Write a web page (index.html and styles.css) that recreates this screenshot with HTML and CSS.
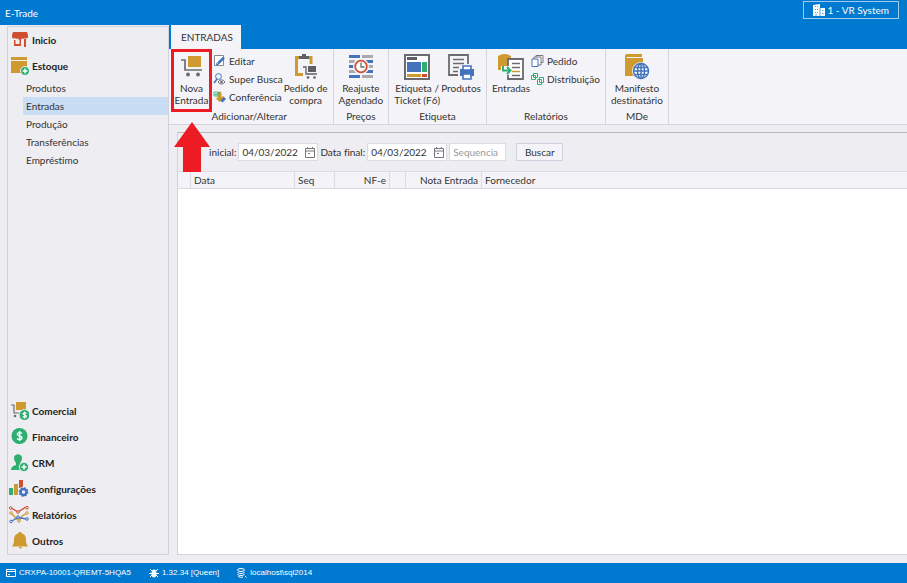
FILE: index.html
```html
<!DOCTYPE html>
<html lang="pt-BR">
<head>
<meta charset="utf-8">
<title>E-Trade</title>
<link rel="stylesheet" href="styles.css">
</head>
<body>
<header class="titlebar">
  <h1 class="app-name">E-Trade</h1>
  <button class="company" type="button">
    <svg width="12" height="12" viewBox="0 0 12 12"><path fill="#fff" d="M0 1l7-1v4h5v8H0z"/><path stroke="#0079d0" stroke-width=".7" d="M2 2.500h1M4 2.500h1M2 5.500h1M4 5.500h1M2 8.500h1M4 8.500h1M9 6.500h1.500M9 9.500h1.500M7 4v8M3 12v-2"/></svg>
    <span>1 - VR System</span>
  </button>
</header>

<div class="shell">
  <nav class="sidebar">
    <div class="menu">
      <a class="menu-item" href="#"><svg width="18" height="18" viewBox="0 0 18 18"><g fill="#d04f31"><path d="M2 1h14l1 3H1z"/><path d="M1 4h16v2a2 2 0 0 1-3 1 2 2 0 0 1-3 0 2 2 0 0 1-4 0 2 2 0 0 1-3 0 2 2 0 0 1-3-1z"/><path d="M3 9h1.500v4h4V9H10v6H3zM13 8h2v8h-2z"/></g></svg>Inicio</a>
      <a class="menu-item" href="#"><svg width="18" height="18" viewBox="0 0 18 18"><path fill="#cf9a30" d="M0 0h16v3H0zM0 4h16v12H0z"/><circle cx="14" cy="14" r="4.500" fill="#2fae71" stroke="#eeedf2"/><path stroke="#fff" stroke-width="1.500" d="M11.500 14h5M14 11.500v5"/></svg>Estoque</a>
      <div class="submenu">
        <a href="#">Produtos</a>
        <a href="#" class="selected">Entradas</a>
        <a href="#">Produção</a>
        <a href="#">Transferências</a>
        <a href="#">Empréstimo</a>
      </div>
    </div>
    <div class="menu">
      <a class="menu-item" href="#"><svg width="18" height="18" viewBox="0 0 18 18"><path fill="#cf9a30" d="M5 0h10v8H5z"/><path fill="none" stroke="#6b6b70" stroke-width="1.200" d="M0 3h3v8h7"/><circle cx="4" cy="14" r="1.300" fill="#6b6b70"/><circle cx="13.500" cy="13" r="5.500" fill="#2fae71" stroke="#eeedf2"/><path fill="none" stroke="#fff" stroke-width="1.100" d="M15.500 11.500c-1-1-3.500-1-3.500.300s3.500 1 3.500 2.400-2.500 1.300-3.700.300M13.700 9.500v7"/></svg>Comercial</a>
      <a class="menu-item" href="#"><svg width="18" height="18" viewBox="0 0 18 18"><circle cx="8.500" cy="8" r="8" fill="#2fae71"/><path fill="none" stroke="#fff" stroke-width="1.400" d="M11 5.500C9.500 4.200 6.300 4.200 6.300 6.200S11 7.800 11 9.800s-3.300 2.200-5 .600M8.600 3v10"/></svg>Financeiro</a>
      <a class="menu-item" href="#"><svg width="18" height="18" viewBox="0 0 18 18"><g fill="#2fae71"><path d="M3 4c0-5 8-5 8 0 0 2-1 4-2 5v2l2 1v4H0c0-3 2-4 5-5V9C4 8 3 6 3 4z"/><circle cx="13" cy="13" r="4.700" stroke="#eeedf2"/></g><path stroke="#fff" stroke-width="1.500" d="M10.500 13h5M13 10.500v5"/></svg>CRM</a>
      <a class="menu-item" href="#"><svg class="wide" width="20" height="18" viewBox="0 0 20 18"><path fill="#2fae71" d="M0 8h4v7H0z"/><path fill="#cf9a30" d="M5 4h4v11H5z"/><path fill="#d04f31" d="M10 0h4v8h-4z"/><circle cx="14.500" cy="12" r="5.500" fill="#eeedf2"/><circle cx="14.500" cy="12" r="3" fill="none" stroke="#4373bd" stroke-width="2.400"/><circle cx="14.500" cy="12" r="4.200" fill="none" stroke="#4373bd" stroke-width="1.400" stroke-dasharray="1.600 1.700"/></svg>Configurações</a>
      <a class="menu-item" href="#"><svg class="wide" width="20" height="18" viewBox="0 0 20 18"><g fill="none" stroke-width="1.400"><path stroke="#d04f31" d="M2 2l7 4 8-5"/><path stroke="#cf9a30" d="M2 7l8 8 3-5 5-3"/><path stroke="#4373bd" d="M2 15.500l7-4 9 1.500"/></g><g fill="#eeedf2" stroke="#d04f31"><circle cx="1.700" cy="2" r="1.300"/><circle cx="9" cy="6" r="1.300"/><circle cx="18" cy="1.700" r="1.300"/></g><g fill="#eeedf2" stroke="#cf9a30"><circle cx="2" cy="7" r="1.300"/><circle cx="10" cy="15" r="1.300"/><circle cx="18" cy="7" r="1.300"/></g><g fill="#eeedf2" stroke="#4373bd"><circle cx="2" cy="15.500" r="1.300"/><circle cx="9" cy="11" r="1.300"/><circle cx="18" cy="13" r="1.300"/></g></svg>Relatórios</a>
      <a class="menu-item" href="#"><svg width="18" height="18" viewBox="0 0 18 18"><path fill="#cf9a30" d="M8 0h2l1 1.500c3 1 4 3 4 7 0 3 1 4 2 6H1c1-2 2-3 2-6 0-4 1-6 4-7zM8 15h3a1.500 1.500 0 0 1-3 0z"/></svg>Outros</a>
    </div>
  </nav>

  <main class="work">
    <div class="tabs"><button class="tab" type="button">ENTRADAS</button></div>
    <div class="ribbon">
      <section class="group">
        <div class="tools">
          <button class="big new-entry" type="button">
            <svg width="26" height="26" viewBox="0 0 26 26"><path fill="#cf9a30" d="M9 2h13v11H9z"/><path fill="none" stroke="#6b6b70" stroke-width="1.700" d="M2 6h4v10h17"/><circle cx="9" cy="20.500" r="1.900" fill="#6b6b70"/><circle cx="19" cy="20.500" r="1.900" fill="#6b6b70"/></svg>
            <span>Nova<br>Entrada</span>
            <svg class="arrow" width="36" height="50" viewBox="0 0 36 50"><path fill="#ed1c24" d="M18 0l18 25h-9v25H9V25H0z"/></svg>
          </button>
          <div class="stack">
            <button type="button"><svg width="13" height="12" viewBox="0 0 12 12"><path fill="#fff" stroke="#88888c" d="M1 .500h9v10H1z"/><path stroke="#4373bd" stroke-width="2.500" d="M4.500 8.500L10.500 2.500"/><path fill="#4373bd" d="M3 7.500L5.500 10 2.500 10.500z"/></svg>Editar</button>
            <button type="button"><svg width="13" height="12" viewBox="0 0 12 12"><circle cx="5" cy="3.500" r="2.900" fill="none" stroke="#4373bd"/><path stroke="#4373bd" stroke-width="1.500" d="M3.500 6L.500 10"/><path fill="#fff" stroke="#6b6b70" d="M4.500 9q3.500-4.500 7 0-3.500 4-7 0z"/><circle cx="8" cy="9" r="1.300" fill="#6b6b70"/></svg>Super Busca</button>
            <button type="button"><svg width="13" height="12" viewBox="0 0 12 12"><path fill="#cf9a30" d="M4 1h4v5l2-1 1 3-5 3-4-4h2z"/><path fill="#d9f2e6" stroke="#2fae71" stroke-width=".8" d="M.500 1h4v4h-4z"/><path fill="none" stroke="#2fae71" d="M1 2.500L2.500 4 6 .500"/><path stroke="#4373bd" stroke-width="3" d="M8 10.500L11.500 7"/></svg>Conferência</button>
          </div>
          <button class="big order" type="button">
            <svg width="26" height="26" viewBox="0 0 26 26"><path fill="none" stroke="#cf9a30" stroke-width="3" d="M6 3.500H3.500v17H10M15 3.500h3V10"/><path fill="#5f5f64" d="M6 2h3V0h4v2h3v3H6zM15 12h8v6h-8z"/><path fill="none" stroke="#5f5f64" stroke-width="1.300" d="M10 13h3v7h11"/><circle cx="15" cy="23.500" r="1.300" fill="#5f5f64"/><circle cx="21.500" cy="23.500" r="1.300" fill="#5f5f64"/></svg>
            <span>Pedido de<br>compra</span>
          </button>
        </div>
        <h2>Adicionar/Alterar</h2>
      </section>
      <section class="group">
        <div class="tools">
          <button class="big" type="button">
            <svg width="26" height="26" viewBox="0 0 26 26"><path stroke="#4373bd" stroke-width="3" d="M1 2.500h11M1 12.500h8M14 17.500h11M1 22.500h11M17 7.500h8"/><path stroke="#aaaaae" stroke-width="3" d="M14 2.500h11M1 7.500h6M1 17.500h7M18 12.500h7M14 22.500h11"/><circle cx="13" cy="12.500" r="6" fill="#fff" stroke="#f4f4f8" stroke-width="4"/><circle cx="13" cy="12.500" r="5.800" fill="#fff" stroke="#d04f31" stroke-width="1.800"/><path fill="none" stroke="#6b6b70" stroke-width="1.300" d="M13 8.500v4.500h3.500"/></svg>
            <span>Reajuste<br>Agendado</span>
          </button>
        </div>
        <h2>Preços</h2>
      </section>
      <section class="group">
        <div class="tools">
          <button class="big" type="button">
            <svg width="26" height="26" viewBox="0 0 26 26"><path fill="#fff" stroke="#6b6b70" stroke-width="2" d="M1 1h24v24H1z"/><path fill="#5f5f64" d="M3 3h10v3H3z"/><path fill="#4373bd" d="M3 8h14v10H3z"/><path fill="#2fae71" d="M18 8h5v10h-5z"/><path fill="#cf9a30" d="M3 20h14v3H3z"/><path fill="#d04f31" d="M18 20h5v3h-5z"/></svg>
            <span>Etiqueta /<br>Ticket (F6)</span>
          </button>
          <button class="big" type="button">
            <svg width="26" height="26" viewBox="0 0 26 26"><path fill="none" stroke="#6b6b70" stroke-width="1.800" d="M10 21H1V1h19v9"/><path stroke="#6b6b70" stroke-width="1.500" d="M5 5.500h11M5 9.500h11M5 13.500h6M5 17.500h5"/><path fill="#4373bd" d="M12 15h14v7H12z"/><path fill="#fff" stroke="#4373bd" stroke-width="1.600" d="M15 12h8v4h-8zM15 20h8v5h-8z"/></svg>
            <span>Produtos</span>
          </button>
        </div>
        <h2>Etiqueta</h2>
      </section>
      <section class="group">
        <div class="tools">
          <button class="big" type="button">
            <svg width="26" height="26" viewBox="0 0 26 26"><path fill="#cf9a30" d="M0 2q6-4 13 0v14H0z"/><path fill="#fff" stroke="#6b6b70" stroke-width="1.800" d="M10 5h15v20H10z"/><path stroke="#6b6b70" stroke-width="1.500" d="M14 9.500h8M14 13.500h8M14 21.500h8"/><path stroke="#cf9a30" stroke-width="1.500" d="M14 17.500h8"/><path fill="#f4f4f8" d="M3 12h8v9H3z"/><path fill="none" stroke="#2fae71" stroke-width="2" d="M5 12v4.500h7M9 13l3.500 3.500L9 20"/></svg>
            <span>Entradas</span>
          </button>
          <div class="stack">
            <button type="button"><svg width="13" height="12" viewBox="0 0 13 12"><g fill="#fff" stroke="#77777b"><path d="M5 .500h7v7H5z"/><path d="M3 2h7v8H3z"/></g><path fill="#fff" stroke="#4373bd" d="M1 4h6v7.500H1z"/></svg>Pedido</button>
            <button type="button"><svg width="13" height="12" viewBox="0 0 13 12"><g fill="#fff" stroke="#2fae71"><path d="M2.500.500h4v4h-4zM.500 2.500h4v4h-4zM8.500 4.500h4v5h-4zM6.500 6.500h4v5h-4z"/></g></svg>Distribuição</button>
          </div>
        </div>
        <h2>Relatórios</h2>
      </section>
      <section class="group">
        <div class="tools">
          <button class="big" type="button">
            <svg width="26" height="26" viewBox="0 0 26 26"><path fill="#cf9a30" d="M3 0h15v3H3q-1 1 0 1h16v18H1V2q0-2 2-2z"/><circle cx="17" cy="17" r="9" fill="#f4f4f8"/><g fill="none" stroke="#4373bd" stroke-width="1.500"><circle cx="17" cy="17" r="7.500" fill="#fff"/><ellipse cx="17" cy="17" rx="3.500" ry="7.500"/><path d="M17 9.500v15M9.500 17h15M10.500 13.500h13M10.500 20.500h13"/></g></svg>
            <span>Manifesto<br>destinatário</span>
          </button>
        </div>
        <h2>MDe</h2>
      </section>
    </div>

    <div class="panel">
      <form class="filters">
        <label for="start">inicial:</label>
        <div class="date"><input id="start" type="text" value="04/03/2022"><svg width="10" height="11" viewBox="0 0 10 11"><path fill="none" stroke="#77777b" d="M.500 1.500h9v9h-9zM.500 4h9M2.500 0v2M7.500 0v2M3 6.500h2"/></svg></div>
        <label for="end">Data final:</label>
        <div class="date"><input id="end" type="text" value="04/03/2022"><svg width="10" height="11" viewBox="0 0 10 11"><path fill="none" stroke="#77777b" d="M.500 1.500h9v9h-9zM.500 4h9M2.500 0v2M7.500 0v2M3 6.500h2"/></svg></div>
        <input class="sequence" type="text" placeholder="Sequencia" aria-label="Sequencia">
        <button class="search" type="button">Buscar</button>
      </form>
      <table class="grid">
        <colgroup><col class="c-mark"><col class="c-date"><col class="c-seq"><col class="c-nfe"><col class="c-flag"><col class="c-note"><col></colgroup>
        <thead><tr><th></th><th>Data</th><th>Seq</th><th class="num">NF-e</th><th></th><th class="num">Nota Entrada</th><th>Fornecedor</th></tr></thead>
      </table>
    </div>
  </main>
</div>

<footer class="status">
  <span><svg width="10" height="8" viewBox="0 0 10 8"><path fill="none" stroke="#fff" d="M.500.500h9v7h-9zM0 2.500h10M2 5.500h2"/></svg>CRXPA-10001-QREMT-5HQA5</span>
  <span><svg width="10" height="10" viewBox="0 0 10 10"><ellipse cx="5" cy="5.500" rx="2.500" ry="4" fill="#fff"/><path stroke="#fff" d="M0 5.500h10M1 1l8 8M9 1L1 9"/></svg>1.32.34 [Queen]</span>
  <span><svg width="10" height="10" viewBox="0 0 10 10"><g fill="none" stroke="#fff"><ellipse cx="4" cy="2" rx="3.500" ry="1.500"/><path d="M.500 4c0 2 7 2 7 0M.500 6c0 2 7 2 7 0M1 8c1 1.500 4 1.500 5 1M8 8l1.500 1.500"/></g></svg>localhost\sql2014</span>
</footer>
</body>
</html>
```
FILE: styles.css
```css
* { box-sizing: border-box; }

body {
  margin: 0;
  height: 100vh;
  display: flex;
  flex-direction: column;
  background: #eeedf2;
  color: #333;
  font: 10px/12px Lato, "Open Sans", sans-serif;
  font-variant-ligatures: none;
}

button, input { font: inherit; font-variant-ligatures: none; color: inherit; }
button { margin: 0; padding: 0; border: 0; background: none; }
a { color: inherit; text-decoration: none; }
h1, h2 { margin: 0; font-size: 10px; font-weight: 400; }
svg { flex: none; }

.titlebar {
  display: flex;
  justify-content: space-between;
  align-items: center;
  height: 25px;
  padding: 0 8px 0 5px;
  background: #0079d0;
  color: #fff;
}
.company {
  display: flex;
  align-items: center;
  gap: 3px;
  align-self: flex-start;
  margin-top: 1px;
  height: 18px;
  padding: 0 9px;
  border: 1px solid #9ccbed;
}

.shell { flex: 1; display: flex; min-height: 0; }

.sidebar {
  flex: none;
  width: 162px;
  margin: 1px 0 8px 7px;
  border: 1px solid #d2d1df;
  display: flex;
  flex-direction: column;
  justify-content: space-between;
}
.menu-item {
  display: flex;
  align-items: center;
  height: 26px;
  gap: 3px;
  padding-left: 3px;
  color: #222;
  font-weight: 700;
}
.menu-item .wide { margin-left: -2px; }
.submenu { display: flex; flex-direction: column; padding-left: 15px; }
.submenu a { line-height: 18px; padding-left: 3px; }
.submenu .selected { background: #c9ddf5; }

.work { flex: 1; min-width: 0; display: flex; flex-direction: column; }
.tabs { height: 24px; padding-left: 2px; background: #0079d0; }
.tab { height: 24px; padding: 0 8px 0 10px; background: #f4f4f8; }

.ribbon {
  display: flex;
  height: 76px;
  padding-left: 2px;
  background: #f4f4f8;
  border-bottom: 1px solid #d5d4df;
}
.group {
  display: flex;
  flex-direction: column;
  justify-content: space-between;
  padding: 0 5px 2px;
  border-right: 1px solid #d5d4df;
}
.group:first-child { padding-left: 0; }
.group h2 { text-align: center; }
.tools { display: flex; gap: 1px; height: 61px; }
.big {
  position: relative;
  display: flex;
  flex-direction: column;
  align-items: center;
  gap: 2px;
  padding-top: 5px;
  white-space: nowrap;
}
.new-entry {
  width: 41px;
  height: 63px;
  border: 3px solid #ed1c24;
  padding-top: 2px;
}
.arrow { position: absolute; top: 70px; left: 0; z-index: 2; }
.stack { display: flex; flex-direction: column; padding-top: 3px; }
.stack button {
  display: flex;
  align-items: center;
  gap: 3px;
  height: 18px;
  white-space: nowrap;
}

.panel {
  flex: 1;
  display: flex;
  flex-direction: column;
  margin: 7px 0 8px 8px;
  border: 1px solid #d2d1df;
  border-top-color: #bbb;
  border-right: 0;
  background: #fff;
}
.filters {
  display: flex;
  align-items: center;
  gap: 2px;
  height: 38px;
  padding-left: 31px;
  background: #eeedf2;
}
.date {
  display: flex;
  align-items: center;
  width: 80px;
  height: 18px;
  padding-right: 2px;
  border: 1px solid #dcdbe5;
  background: #fff;
}
.date input { flex: 1; min-width: 0; padding: 0 3px; border: 0; background: none; outline: 0; }
.sequence { width: 57px; height: 18px; padding: 0 3px; border: 1px solid #dcdbe5; background: #fff; }
.sequence::placeholder { color: #999; }
.search {
  width: 47px;
  height: 18px;
  margin-left: 8px;
  border: 1px solid #d2d1df;
  background: #f4f4f8;
}

.grid { width: 100%; table-layout: fixed; border-collapse: separate; border-spacing: 0; }
.grid th {
  height: 18px;
  padding: 0 3px;
  border: solid #dcdbe5;
  border-width: 1px 1px 1px 0;
  background: #f4f4f8;
  font-weight: 400;
  text-align: left;
  white-space: nowrap;
}
.grid th:last-child { border-right: 0; }
.grid .num { text-align: right; }
.c-mark { width: 13px; }
.c-date { width: 104px; }
.c-seq { width: 40px; }
.c-nfe { width: 55px; }
.c-flag { width: 16px; }
.c-note { width: 76px; }

.status {
  display: flex;
  align-items: center;
  gap: 18px;
  height: 20px;
  padding-left: 6px;
  background: #0079d0;
  color: #fff;
  font: 8px/12px "Liberation Sans", sans-serif;
}
.status span { display: flex; align-items: center; gap: 3px; }
```
